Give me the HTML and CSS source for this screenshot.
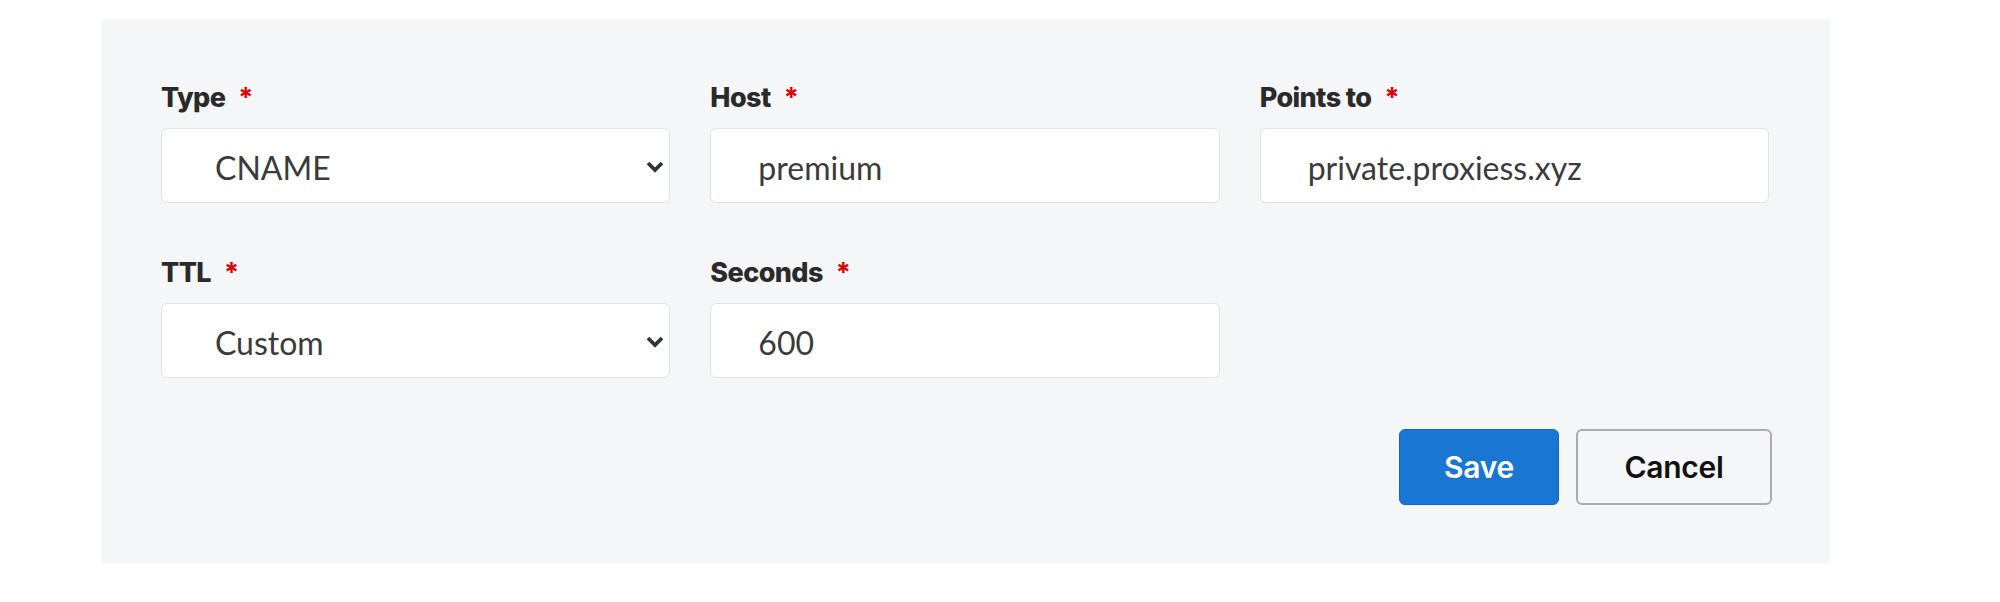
FILE: index.html
```html
<!DOCTYPE html>
<html lang="en">
<head>
<meta charset="utf-8">
<title>Edit record</title>
<link rel="stylesheet" href="styles.css">
</head>
<body>
<div class="page">
  <form class="panel">
    <div class="fields">
      <div class="field">
        <label class="label">Type<span class="req">*</span></label>
        <div class="select-wrap">
          <select class="control select"><option>CNAME</option></select>
          <svg class="chev" width="20" height="14" viewBox="0 0 20 14"><path d="M3 3 L10 10 L17 3" fill="none" stroke="#333" stroke-width="3.8" stroke-linejoin="miter"/></svg>
        </div>
      </div>
      <div class="field">
        <label class="label">Host<span class="req">*</span></label>
        <input class="control input" value="premium">
      </div>
      <div class="field">
        <label class="label">Points to<span class="req">*</span></label>
        <input class="control input" value="private.proxiess.xyz">
      </div>
      <div class="field">
        <label class="label">TTL<span class="req">*</span></label>
        <div class="select-wrap">
          <select class="control select"><option>Custom</option></select>
          <svg class="chev" width="20" height="14" viewBox="0 0 20 14"><path d="M3 3 L10 10 L17 3" fill="none" stroke="#333" stroke-width="3.8" stroke-linejoin="miter"/></svg>
        </div>
      </div>
      <div class="field">
        <label class="label">Seconds<span class="req">*</span></label>
        <input class="control input" value="600">
      </div>
    </div>
    <div class="actions">
      <button type="button" class="btn btn-primary">Save</button>
      <button type="button" class="btn btn-secondary">Cancel</button>
    </div>
  </form>
</div>
</body>
</html>
```
FILE: styles.css
```css
html, body {
  margin: 0;
  padding: 0;
  background: #ffffff;
}
.page {
  padding: 19px 0 0 102px;
}
.panel {
  box-sizing: border-box;
  width: 1728px;
  height: 544px;
  margin: 0;
  background: #f5f6f7;
  padding: 62px 58px 0 59px;
  display: flex;
  flex-direction: column;
}
.fields {
  display: grid;
  grid-template-columns: repeat(3, 1fr);
  column-gap: 40px;
  row-gap: 53px;
  margin-right: 3px;
}
.field {
  display: flex;
  flex-direction: column;
  gap: 14px;
}
.label {
  font-family: Inter, "Noto Sans", sans-serif;
  font-weight: 800;
  font-size: 27px;
  line-height: 33px;
  letter-spacing: -0.6px;
  color: #2a2a2a;
}
.req {
  color: #dd0000;
  margin-left: 13px;
  font-weight: 700;
}
.control {
  box-sizing: border-box;
  width: 100%;
  height: 75px;
  margin: 0;
  background: #ffffff;
  border: 1.5px solid #e2e3e4;
  border-radius: 6px;
  font-family: Lato, "Noto Sans", sans-serif;
  font-size: 32px;
  color: #3b3b3b;
  padding: 4px 0 0 47px;
  outline: none;
}
.select {
  appearance: none;
  -webkit-appearance: none;
  padding-left: 53px;
}
.select-wrap {
  position: relative;
}
.chev {
  position: absolute;
  right: 5px;
  top: 32px;
  pointer-events: none;
}
.actions {
  display: flex;
  justify-content: flex-end;
  gap: 17px;
  margin-top: 51px;
}
.btn {
  box-sizing: border-box;
  height: 76px;
  border-radius: 6px;
  font-family: Inter, "Noto Sans", sans-serif;
  font-weight: 600;
  font-size: 30px;
  letter-spacing: -0.3px;
  cursor: pointer;
}
.btn-primary {
  width: 160px;
  background: #1976d3;
  border: 1px solid #1468c4;
  color: #ffffff;
}
.btn-secondary {
  width: 196px;
  background: #f5f6f7;
  border: 2px solid #a3aeb9;
  color: #111111;
}
```
